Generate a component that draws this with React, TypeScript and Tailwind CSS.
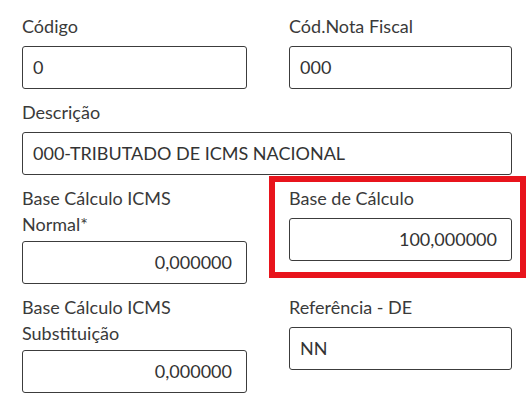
import React from 'react';

type FieldProps = {
  label: string;
  value?: string;
  right?: boolean;
  twoLine?: boolean;
  className?: string;
};

const Field: React.FC<FieldProps> = ({ label, value = '', right, twoLine, className }) => {
  return (
    <div className={className}>
      <label className="block whitespace-pre-line text-[18px] leading-[26px] text-[#3a3a3a]">{label}</label>
      <div
        className={
          'h-[43px] rounded-[3px] border-[1.5px] border-[#3c3c3c] bg-white flex items-center text-[18px] text-[#333] ' +
          (twoLine ? 'mt-[4px] ' : 'mt-[7px] ') +
          (right ? 'justify-end pr-[14px]' : 'pl-[10px]')
        }
      >
        {value}
      </div>
    </div>
  );
};

export default function App() {
  return (
    <div className="w-[531px] h-[408px] overflow-hidden bg-white font-['Lato',sans-serif]">
      <div className="grid grid-cols-[225px_223px] items-start gap-x-[42px] gap-y-[10px] pl-[22px] pt-[13px]">
        <Field label="Código" value="0" />
        <Field label="Cód.Nota Fiscal" value="000" />

        <Field label="Descrição" value="000-TRIBUTADO DE ICMS NACIONAL" className="col-span-2" />

        <Field label={'Base Cálculo ICMS\nNormal*'} value="0,000000" right twoLine />
        <div className="relative">
          <Field label="Base de Cálculo" value="100,000000" right />
          <div className="absolute -left-[20px] -right-[14px] -top-[9px] -bottom-[17px] border-[6px] border-[#e8141c]" />
        </div>

        <Field label={'Base Cálculo ICMS\nSubstituição'} value="0,000000" right twoLine />
        <Field label="Referência - DE" value="NN" />

        <Field label="Referência - ST" />
        <Field label="Referência - EX" />
      </div>
    </div>
  );
}
